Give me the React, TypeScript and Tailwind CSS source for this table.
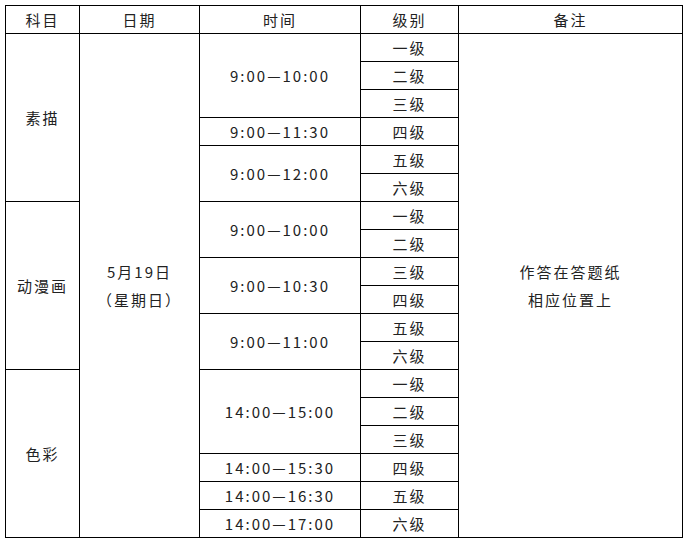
import React from 'react';

type Cell = { text: string; rowSpan?: number };

// each row: list of cells that start in that row (subject, date, time, level, note)
const rows: Cell[][] = [
  [{ text: '素描', rowSpan: 6 }, { text: '5月19日\n（星期日）', rowSpan: 18 }, { text: '9:00—10:00', rowSpan: 3 }, { text: '一级' }, { text: '作答在答题纸\n相应位置上', rowSpan: 18 }],
  [{ text: '二级' }],
  [{ text: '三级' }],
  [{ text: '9:00—11:30' }, { text: '四级' }],
  [{ text: '9:00—12:00', rowSpan: 2 }, { text: '五级' }],
  [{ text: '六级' }],
  [{ text: '动漫画', rowSpan: 6 }, { text: '9:00—10:00', rowSpan: 2 }, { text: '一级' }],
  [{ text: '二级' }],
  [{ text: '9:00—10:30', rowSpan: 2 }, { text: '三级' }],
  [{ text: '四级' }],
  [{ text: '9:00—11:00', rowSpan: 2 }, { text: '五级' }],
  [{ text: '六级' }],
  [{ text: '色彩', rowSpan: 6 }, { text: '14:00—15:00', rowSpan: 3 }, { text: '一级' }],
  [{ text: '二级' }],
  [{ text: '三级' }],
  [{ text: '14:00—15:30' }, { text: '四级' }],
  [{ text: '14:00—16:30' }, { text: '五级' }],
  [{ text: '14:00—17:00' }, { text: '六级' }],
];

const headers = ['科目', '日期', '时间', '级别', '备注'];

export default function App() {
  return (
    <div className="w-[689px] h-[543px] bg-white pl-[5px] pt-[5px] text-[#222] text-[15px] tracking-[2px]" style={{ fontFamily: '"Noto Sans CJK SC", "Noto Sans", sans-serif' }}>
      <table className="table-fixed border-collapse w-[677px]">
        <colgroup>
          <col className="w-[74px]" />
          <col className="w-[120px]" />
          <col className="w-[161px]" />
          <col className="w-[98px]" />
          <col className="w-[224px]" />
        </colgroup>
        <thead>
          <tr className="h-[28px]">
            {headers.map(h => (
              <th key={h} className="border border-black font-normal text-center align-middle p-0 leading-[20px]">{h}</th>
            ))}
          </tr>
        </thead>
        <tbody>
          {rows.map((row, i) => (
            <tr key={i} className="h-[28px]">
              {row.map((c, j) => (
                <td
                  key={j}
                  rowSpan={c.rowSpan}
                  className={
                    c.text.includes('\n')
                      ? 'border border-black text-center align-middle p-0 leading-[28px] whitespace-pre-line'
                      : 'border border-black text-center align-middle p-0 leading-[20px]'
                  }
                >
                  {c.text}
                </td>
              ))}
            </tr>
          ))}
        </tbody>
      </table>
    </div>
  );
}
